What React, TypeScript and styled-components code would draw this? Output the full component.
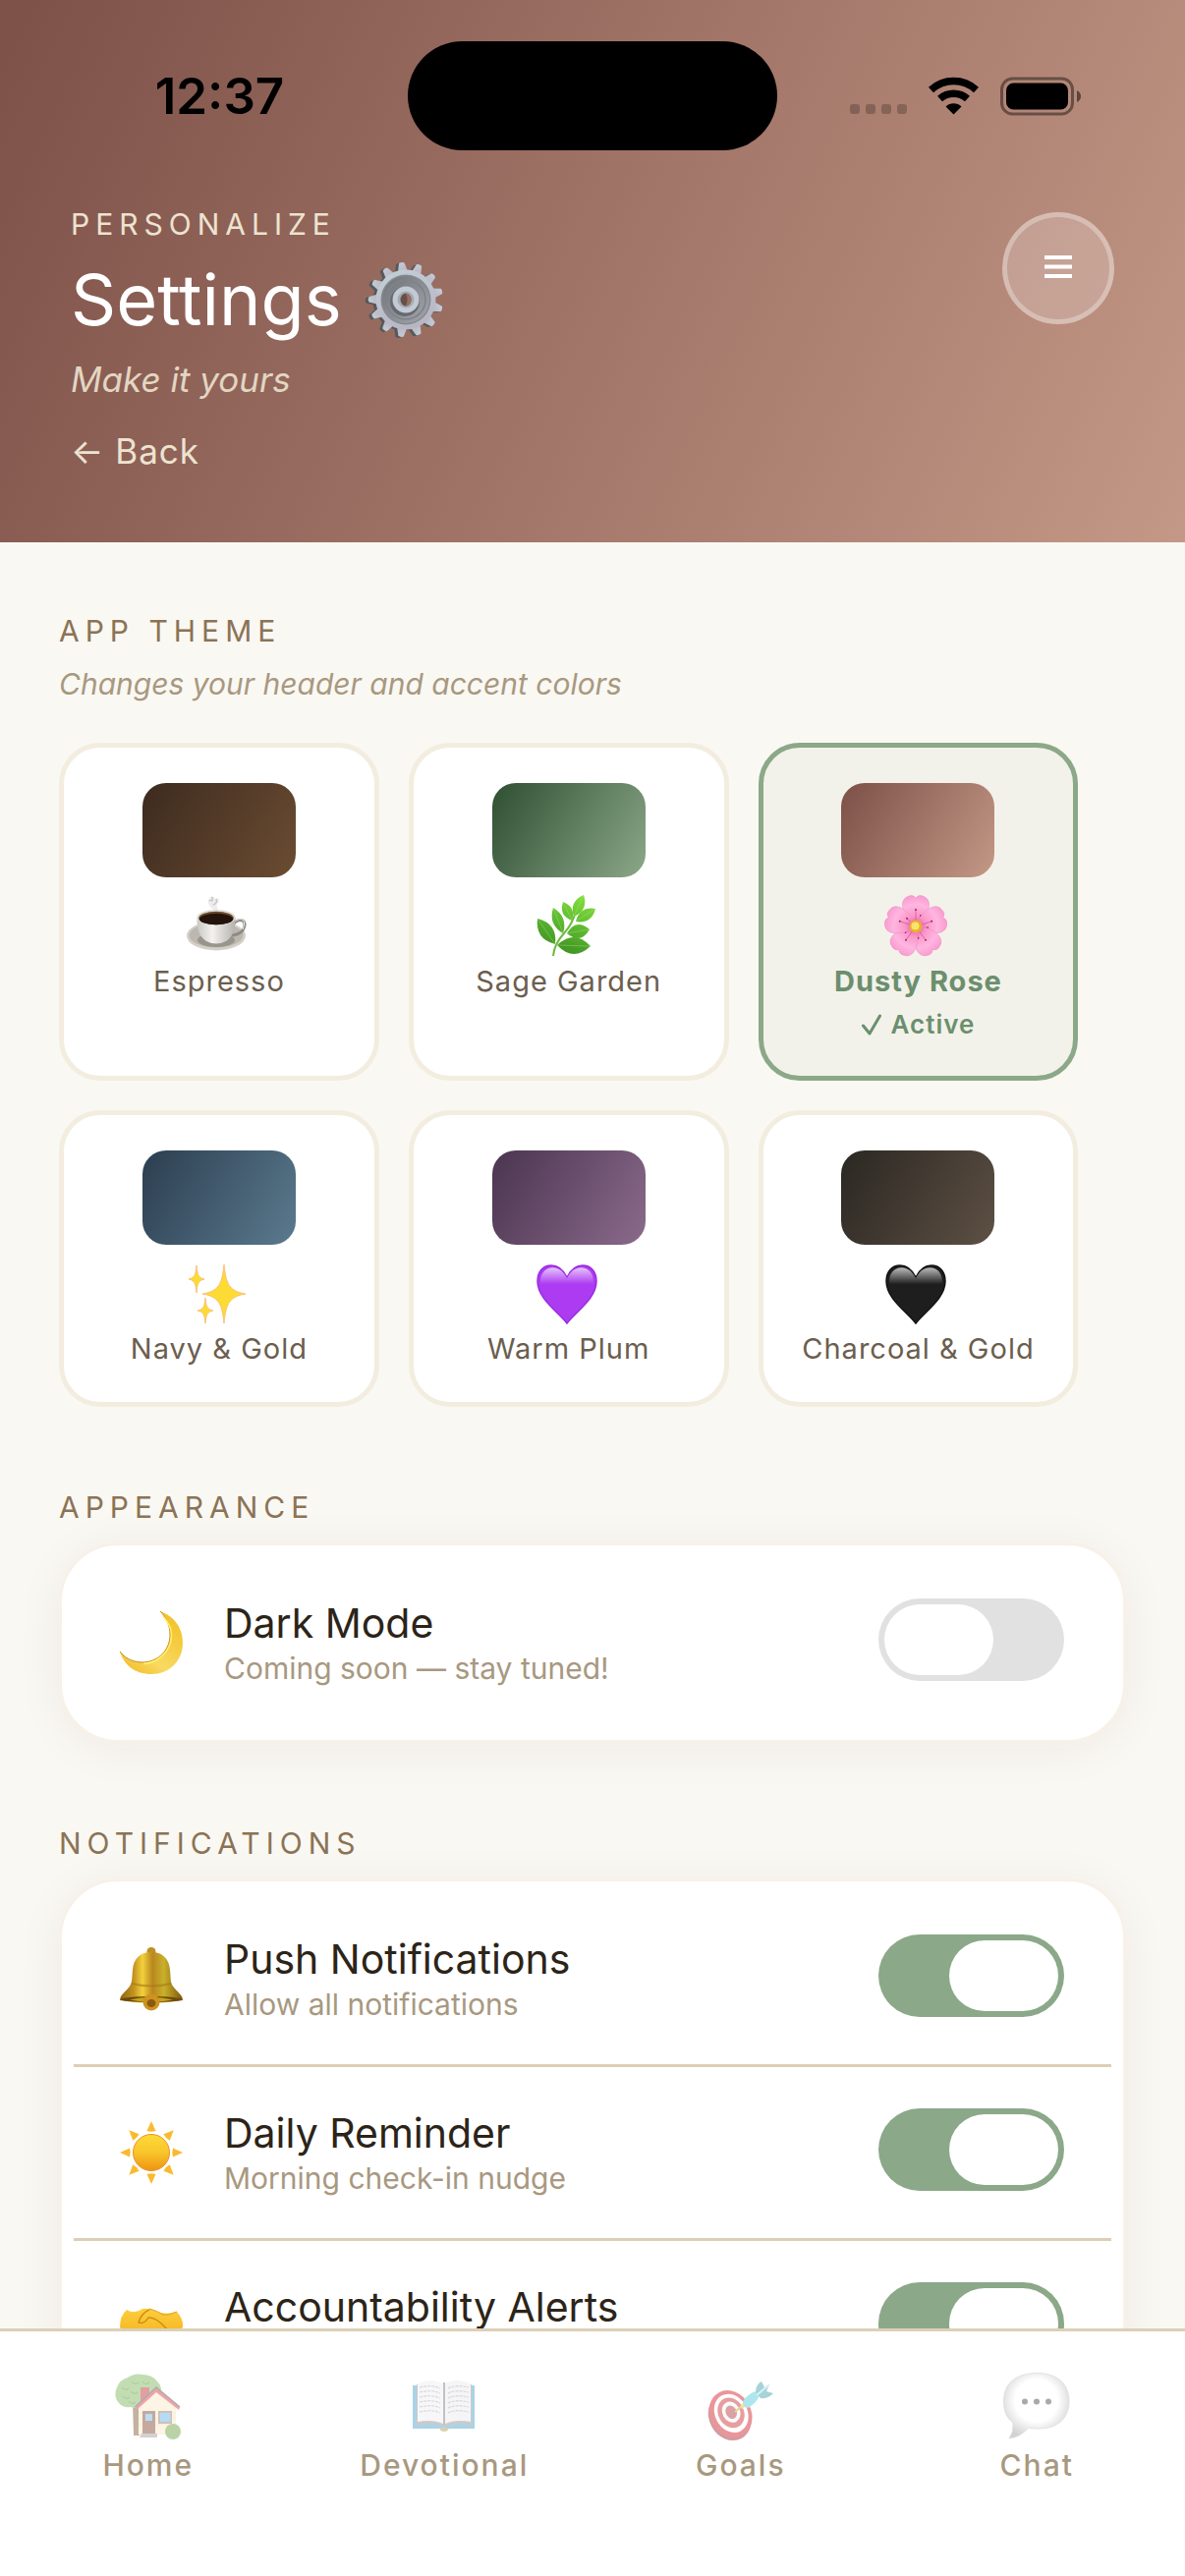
import React, { useState } from 'react';
import styled, { createGlobalStyle } from 'styled-components';

const GlobalStyle = createGlobalStyle`
  *, *::before, *::after { box-sizing: border-box; }
  html, body, #root { height: 100%; }
  body {
    margin: 0;
    background: #faf8f3;
    font-family: Inter, Roboto, "Liberation Sans", sans-serif;
    -webkit-font-smoothing: antialiased;
  }
  h1, h2, p { margin: 0; font-weight: 400; }
  button { font: inherit; }
`;

/* ---------- layout ---------- */

const Screen = styled.div`
  display: flex;
  flex-direction: column;
  height: 100vh;
  overflow: hidden;
`;

const Header = styled.header`
  flex: none;
  background: linear-gradient(115deg, #7d5048, #c49886);
`;

const StatusBar = styled.div`
  display: grid;
  grid-template-columns: 1fr 378px 1fr;
  align-items: center;
  justify-items: center;
  height: 195px;
  padding: 0 33px;
`;

const Clock = styled.time`
  font-size: 51px;
  line-height: 60px;
  font-weight: 600;
  color: #000;
`;

const Island = styled.div`
  width: 376px;
  height: 111px;
  border-radius: 56px;
  background: #000;
`;

const StatusIcons = styled.svg`
  display: block;
  width: 236px;
  height: 40px;
`;

const HeaderRow = styled.div`
  display: flex;
  justify-content: space-between;
  align-items: flex-start;
  padding: 15px 72px 70px;
`;

const HeaderCopy = styled.div`
  display: flex;
  flex-direction: column;
  align-items: flex-start;
`;

const Overline = styled.p`
  font-size: 30px;
  line-height: 36px;
  letter-spacing: 6px;
  color: #ede3d0;
`;

const Title = styled.h1`
  display: flex;
  align-items: center;
  gap: 24px;
  margin-top: 14px;
  font-size: 72px;
  line-height: 90px;
  color: #fff;
`;

const Tagline = styled.p`
  margin-top: 14px;
  font-size: 35px;
  line-height: 45px;
  font-style: italic;
  color: #e2d6c2;
`;

const BackLink = styled.a`
  margin-top: 28px;
  font-size: 35px;
  line-height: 45px;
  letter-spacing: 1px;
  color: #ede3d0;
  text-decoration: none;
`;

const MenuButton = styled.button`
  display: grid;
  place-items: center;
  width: 114px;
  height: 114px;
  margin-top: 6px;
  padding: 0;
  border: 5px solid rgba(255, 255, 255, 0.3);
  border-radius: 50%;
  background: rgba(255, 255, 255, 0.2);
  color: #fff;
`;

const Content = styled.main`
  flex: 1;
  min-height: 0;
  display: flex;
  flex-direction: column;
  gap: 84px;
  padding: 72px 60px 0;
  overflow: hidden auto;
  scrollbar-width: none;
`;

const Section = styled.section`
  flex: none;
`;

const SectionLabel = styled.h2`
  font-size: 30px;
  line-height: 36px;
  letter-spacing: 6px;
  color: #8b7355;
`;

const SectionHint = styled.p`
  margin-top: 18px;
  font-size: 30px;
  line-height: 36px;
  font-style: italic;
  color: #a89880;
`;

/* ---------- theme picker ---------- */

const ThemeGrid = styled.div`
  display: flex;
  flex-wrap: wrap;
  gap: 30px;
  margin-top: 42px;
`;

const ThemeCard = styled.button<{ $active: boolean }>`
  display: flex;
  flex-direction: column;
  align-items: center;
  width: 30%;
  padding: 36px 0;
  border: 5px solid ${(p) => (p.$active ? '#8ba888' : '#f3ede0')};
  border-radius: 42px;
  background: ${(p) => (p.$active ? '#f3f2ea' : '#fff')};
  color: ${(p) => (p.$active ? '#6b8f6e' : '#6b5e4e')};
`;

const Swatch = styled.span<{ $from: string; $to: string }>`
  width: 156px;
  height: 96px;
  border-radius: 24px;
  background: linear-gradient(121deg, ${(p) => p.$from}, ${(p) => p.$to});
`;

const ThemeGlyph = styled.span`
  display: flex;
  padding: 18px 4px 6px 0;
`;

const Glyph = styled.svg<{ $size: number }>`
  display: block;
  flex: none;
  width: ${(p) => p.$size}px;
  height: ${(p) => p.$size}px;
  overflow: visible;
`;

const ThemeName = styled.span<{ $active: boolean }>`
  font-size: 29px;
  line-height: 36px;
  letter-spacing: 1px;
  font-weight: ${(p) => (p.$active ? 700 : 400)};
  white-space: nowrap;
`;

const ActiveMark = styled.span`
  display: flex;
  align-items: center;
  gap: 10px;
  margin-top: 9px;
  font-size: 26px;
  line-height: 33px;
  letter-spacing: 1px;
  font-weight: 600;
`;

/* ---------- settings list ---------- */

const Card = styled.div`
  margin-top: 18px;
  padding: 12px;
  border: 3px solid #f7f1e7;
  border-radius: 60px;
  background: #fff;
  box-shadow: 0 6px 48px rgba(44, 36, 24, 0.06);
`;

const Row = styled.label`
  display: flex;
  align-items: center;
  height: 174px;
  padding: 0 48px 0 47px;

  & + & {
    height: 177px;
    border-top: 3px solid #dccfb6;
  }
`;

const RowCopy = styled.span`
  flex: 1;
  display: flex;
  flex-direction: column;
  gap: 1px;
  min-height: 91px;
  margin-left: 42px;
`;

const RowTitle = styled.span`
  font-size: 41px;
  line-height: 51px;
  color: #2c2418;
`;

const RowHint = styled.span`
  font-size: 30px;
  line-height: 39px;
  color: #a89880;
`;

const Switch = styled.input`
  appearance: none;
  flex: none;
  display: flex;
  justify-content: flex-start;
  width: 189px;
  height: 84px;
  margin: 0 0 6px;
  padding: 6px;
  border-radius: 42px;
  background: #e1e1e1;

  &::before {
    content: '';
    width: 111px;
    height: 72px;
    border-radius: 36px;
    background: #fff;
  }

  &:checked {
    justify-content: flex-end;
    background: #8ba888;
  }
`;

/* ---------- tab bar ---------- */

const TabBar = styled.nav`
  flex: none;
  display: grid;
  grid-template-columns: repeat(4, 1fr);
  padding: 42px 0 95px;
  border-top: 3px solid #dccfb6;
  background: #fff;
`;

const Tab = styled.a`
  display: flex;
  flex-direction: column;
  align-items: center;
  gap: 8px;
  color: #a89880;
  text-decoration: none;

  svg { opacity: 0.5; }
`;

const TabLabel = styled.span`
  font-size: 30px;
  line-height: 36px;
  letter-spacing: 2px;
  font-weight: 500;
`;

/* ---------- drawings ---------- */

const GearIcon = () => (
  <Glyph $size={78} viewBox="0 0 78 78" aria-hidden="true">
    <defs>
      <linearGradient id="gearFace" x1="0" y1="0" x2="0.4" y2="1">
        <stop offset="0" stopColor="#c3d0d8" />
        <stop offset="1" stopColor="#b9b6c4" />
      </linearGradient>
      <linearGradient id="gearDish" x1="0" y1="0" x2="1" y2="1">
        <stop offset="0" stopColor="#6f7479" />
        <stop offset="1" stopColor="#a3a5ad" />
      </linearGradient>
    </defs>
    {[0, 1].map((layer) => (
      <g key={layer} transform={layer ? 'translate(1 0)' : 'translate(-2 1)'} fill={layer ? 'url(#gearFace)' : '#55595b'}>
        {Array.from({ length: 13 }, (_, i) => (
          <path key={i} d="M34.500 12 L37 1.500 Q40 0 42.500 1.500 L45.500 12 Z" transform={`rotate(${(i * 360) / 13 - 6} 40 39)`} />
        ))}
        <circle cx="40" cy="39" r="30.500" />
      </g>
    ))}
    <circle cx="41" cy="39" r="25.500" fill="#858a91" />
    <circle cx="41" cy="39" r="24" fill="url(#gearDish)" />
    <circle cx="41" cy="39" r="20" fill="none" stroke="#7f8389" strokeWidth="1.500" />
    <circle cx="40" cy="41" r="15" fill="#66696e" />
    <circle cx="41" cy="39" r="13.500" fill="#c2cad4" />
    <circle cx="41" cy="39" r="8.500" fill="#a4aab4" />
    <ellipse cx="41" cy="39" rx="5.500" ry="6.500" fill="#66514b" />
    <path d="M41 32.500 A5.500 6.500 0 0 1 41 45.500 Q44 39 41 32.500Z" fill="#99705f" />
  </Glyph>
);

const CoffeeIcon = () => (
  <Glyph $size={64} viewBox="0 0 64 64" aria-hidden="true">
    <defs>
      <linearGradient id="cup" x1="0" x2="1">
        <stop offset="0" stopColor="#c9c7c2" />
        <stop offset="0.4" stopColor="#f3f2ee" />
        <stop offset="1" stopColor="#b5b2ac" />
      </linearGradient>
    </defs>
    <path d="M28 15 Q20 8 24 3 Q28 -1 30 4 Q34 1 34 7 Q30 9 33 15" fill="#e9e9e9" opacity="0.8" />
    <path d="M24 5 Q28 8 27 2 M31 4 Q33 8 28 10" fill="none" stroke="#c5c5c5" strokeWidth="1.500" />
    <ellipse cx="31" cy="41.500" rx="30" ry="15" fill="#d3d0ca" />
    <ellipse cx="31" cy="41" rx="27.500" ry="12.500" fill="#bcb8b0" />
    <ellipse cx="31" cy="46" rx="19" ry="7" fill="#99958c" />
    <path d="M48 30 Q53 24 58 26 Q62 29 58 36 Q54 41 45 41" fill="none" stroke="#8f8c86" strokeWidth="3" />
    <path d="M48 29 Q53 23 58 25 Q61 28 58 35" fill="none" stroke="#ecebe7" strokeWidth="1" />
    <path d="M11.500 23 Q11 41 21 47 Q31 52 41 47 Q51 41 50.500 23Z" fill="url(#cup)" />
    <ellipse cx="31" cy="23" rx="19.500" ry="8" fill="#dcdad5" />
    <ellipse cx="31" cy="23.500" rx="17.800" ry="6.800" fill="#6b4a2b" />
    <ellipse cx="31" cy="24.500" rx="17" ry="5.800" fill="#24130b" />
  </Glyph>
);

type LeafProps = { from: [number, number]; to: [number, number]; bulge: number };

const Leaf = ({ from: [x1, y1], to: [x2, y2], bulge }: LeafProps) => {
  const len = Math.hypot(x2 - x1, y2 - y1);
  const nx = (-(y2 - y1) / len) * bulge;
  const ny = ((x2 - x1) / len) * bulge;
  const mx = x1 + (x2 - x1) * 0.5;
  const my = y1 + (y2 - y1) * 0.5;
  return (
    <g>
      <path d={`M${x1} ${y1} Q${mx + nx} ${my + ny} ${x2} ${y2} Q${mx - nx} ${my - ny} ${x1} ${y1}Z`} fill="url(#leaf)" />
      <path d={`M${x1} ${y1} L${x2} ${y2}`} stroke="#b5e884" strokeWidth="0.6" opacity="0.6" />
    </g>
  );
};

const HerbIcon = () => (
  <Glyph $size={64} viewBox="0 0 64 64" aria-hidden="true">
    <defs>
      <linearGradient id="leaf" gradientUnits="userSpaceOnUse" x1="48" y1="0" x2="24" y2="62">
        <stop offset="0" stopColor="#83df3c" />
        <stop offset="0.5" stopColor="#5cb930" />
        <stop offset="1" stopColor="#3c8c22" />
      </linearGradient>
    </defs>
    <path d="M18 62 Q19 50 29 39 Q38 29 41 16" fill="none" stroke="#6cbb3c" strokeWidth="2" />
    <Leaf from={[20, 50]} to={[2, 24]} bulge={14} />
    <Leaf from={[28, 39]} to={[18, 13]} bulge={11} />
    <Leaf from={[37, 26]} to={[28, 7]} bulge={10} />
    <Leaf from={[39, 22]} to={[49, 0]} bulge={11} />
    <Leaf from={[41, 27]} to={[61, 14]} bulge={11} />
    <Leaf from={[32, 39]} to={[55, 35]} bulge={14} />
    <Leaf from={[22, 51]} to={[56, 52]} bulge={17} />
  </Glyph>
);

const BlossomIcon = () => (
  <Glyph $size={64} viewBox="0 0 64 64" aria-hidden="true">
    <defs>
      <radialGradient id="petal" gradientUnits="userSpaceOnUse" cx="32" cy="32" r="32">
        <stop offset="0" stopColor="#e0559c" />
        <stop offset="0.35" stopColor="#fb98cb" />
        <stop offset="0.7" stopColor="#ffb6e0" />
        <stop offset="1" stopColor="#f99ad0" />
      </radialGradient>
    </defs>
    {[0, 72, 144, 216, 288].map((a) => (
      <g key={a} transform={`rotate(${a} 32 32)`}>
        <path d="M32 32 C22 26 12 6 24 1.500 Q29 -1 32 3 Q35 -1 40 1.500 C52 6 42 26 32 32Z" fill="url(#petal)" stroke="#f08fc4" strokeWidth="0.6" />
        <path d="M32 27 L32 16 M34 27 L37 21" stroke="#d75a98" strokeWidth="0.8" />
        <circle cx="32" cy="15" r="1" fill="#8f2457" />
        <circle cx="37" cy="21" r="1" fill="#8f2457" />
      </g>
    ))}
    <circle cx="32" cy="32" r="6.500" fill="#e6b02e" />
    <circle cx="31.500" cy="31.500" r="4" fill="#fbe36b" />
  </Glyph>
);

const STAR = (cx: number, cy: number, rx: number, ry: number) =>
  `M${cx} ${cy - ry} C${cx + rx * 0.1} ${cy - ry * 0.3} ${cx + rx * 0.25} ${cy - ry * 0.1} ${cx + rx} ${cy} C${cx + rx * 0.25} ${cy + ry * 0.1} ${cx + rx * 0.1} ${cy + ry * 0.3} ${cx} ${cy + ry} C${cx - rx * 0.1} ${cy + ry * 0.3} ${cx - rx * 0.25} ${cy + ry * 0.1} ${cx - rx} ${cy} C${cx - rx * 0.25} ${cy - ry * 0.1} ${cx - rx * 0.1} ${cy - ry * 0.3} ${cx} ${cy - ry}Z`;

const SparklesIcon = () => (
  <Glyph $size={64} viewBox="0 0 64 64" aria-hidden="true">
    <g fill="#fddb35" stroke="#f9b868" strokeWidth="0.8">
      <path d={STAR(39, 32, 22, 30)} />
      <path d={STAR(11, 17, 8, 14)} />
      <path d={STAR(20, 49, 8, 13)} />
    </g>
  </Glyph>
);

const HEART =
  'M32 62 C23 50 2 37 2 19 C2 9 8 3 16 3 C24 3 29 9 32 15 C35 9 40 3 48 3 C56 3 62 9 62 19 C62 37 41 50 32 62Z';

const HeartIcon = ({ id, fill, edge }: { id: string; fill: string; edge: string }) => (
  <Glyph $size={64} viewBox="0 0 64 64" aria-hidden="true">
    <defs>
      <linearGradient id={id} x1="0" y1="0" x2="0" y2="1">
        <stop offset="0" stopColor="#fff" stopOpacity="0.7" />
        <stop offset="0.32" stopColor="#fff" stopOpacity="0" />
      </linearGradient>
    </defs>
    <path d={HEART} fill={fill} stroke={edge} strokeWidth="1.500" />
    <path d={HEART} fill={`url(#${id})`} transform="translate(3.200 2.500) scale(0.9)" />
  </Glyph>
);

const MoonIcon = () => (
  <Glyph $size={64} viewBox="0 0 64 64" aria-hidden="true">
    <defs>
      <linearGradient id="moon" x1="0.2" y1="1" x2="1" y2="0">
        <stop offset="0" stopColor="#f3bf2c" />
        <stop offset="0.3" stopColor="#f8da62" />
        <stop offset="1" stopColor="#f2bd1f" />
      </linearGradient>
    </defs>
    <path d="M41 0 C55 5 64 17 64 32 C64 51 50 64 32 64 C16 64 4 55 0 41 C7 50 16 52 24 52 C40 51 51 39 51 24 C51 14 47 6 41 0Z" fill="url(#moon)" />
    <path d="M41 0 C47 6 51 14 51 24 C51 39 40 51 24 52 C16 52 7 50 0 41" fill="none" stroke="#c98a23" strokeWidth="1" />
    <path d="M44 5 C49 11 52.500 17 52.500 24 C52.500 40 40 52.500 24 53.500" fill="none" stroke="#fff06a" strokeWidth="1.500" />
  </Glyph>
);

const BellIcon = () => (
  <Glyph $size={64} viewBox="0 0 64 64" aria-hidden="true">
    <defs>
      <linearGradient id="bell" x1="0" x2="1">
        <stop offset="0" stopColor="#8d6511" />
        <stop offset="0.22" stopColor="#c3921f" />
        <stop offset="0.36" stopColor="#f3d13b" />
        <stop offset="0.52" stopColor="#b98720" />
        <stop offset="0.7" stopColor="#c9b02a" />
        <stop offset="1" stopColor="#805510" />
      </linearGradient>
    </defs>
    <circle cx="32" cy="4.500" r="4.500" fill="#c08f22" />
    <path d="M32 5 C20 5 14 12 13 23 C12 33 13 36 9 41 C5 46 0 49 0 54 Q32 60 64 54 C64 49 59 46 55 41 C51 36 52 33 51 23 C50 12 44 5 32 5Z" fill="url(#bell)" />
    <path d="M12 37 Q32 42 52 37" fill="none" stroke="#a87718" strokeWidth="2" opacity="0.6" />
    <ellipse cx="32" cy="53" rx="31" ry="3" fill="#6f4a0d" />
    <path d="M10 53.500 Q32 48 54 53.500 Q32 58 10 53.500Z" fill="#c3a51f" />
    <circle cx="32" cy="56" r="8.500" fill="#cf921f" />
    <ellipse cx="32" cy="57" rx="4.500" ry="4" fill="#8b5a12" />
  </Glyph>
);

const SunIcon = () => (
  <Glyph $size={64} viewBox="0 0 64 64" aria-hidden="true">
    <defs>
      <linearGradient id="sun" x1="0" y1="0" x2="0" y2="1">
        <stop offset="0" stopColor="#fddb36" />
        <stop offset="0.5" stopColor="#f8c52b" />
        <stop offset="1" stopColor="#ef9311" />
      </linearGradient>
    </defs>
    {Array.from({ length: 8 }, (_, i) => (
      <path key={i} d="M32 0 L36.500 10 Q32 11.500 27.500 10Z" fill="#f9bb2d" transform={`rotate(${i * 45} 32 32)`} />
    ))}
    <circle cx="32" cy="32" r="18.500" fill="url(#sun)" stroke="#e9912a" strokeWidth="1" />
  </Glyph>
);

const HandshakeIcon = () => (
  <Glyph $size={64} viewBox="0 0 64 64" aria-hidden="true">
    <defs>
      <linearGradient id="hands" x1="0" y1="0" x2="0" y2="1">
        <stop offset="0" stopColor="#fdcf3c" />
        <stop offset="1" stopColor="#f0ab1c" />
      </linearGradient>
    </defs>
    <path d="M7 15 Q15 20 23 14 Q30 13 36 16 Q45 21 58 17 Q65 25 64 33 Q58 38 52 41 Q40 54 30 50 Q18 44 12 36 Q5 38 0 33 Q0 21 7 15Z" fill="url(#hands)" />
    <path d="M30 15 Q22 18 19 28 Q25 30 29 23 Q37 22 48 35" fill="none" stroke="#d18d14" strokeWidth="1.500" />
    <path d="M58 17 Q50 21 44 20 Q38 16 30 14" fill="none" stroke="#e0a01f" strokeWidth="1" />
  </Glyph>
);

const HouseIcon = () => (
  <Glyph $size={68} viewBox="0 0 68 68" aria-hidden="true">
    <path d="M18 30 H25 V64 H19Z" fill="#8a6845" />
    <path d="M4 31 Q-2 24 2 15 Q5 7 13 5 Q20 0 28 2 Q38 2 43 9 Q48 13 47 22 Q44 32 33 33 Q24 38 16 35 Q8 36 4 31Z" fill="#87bd66" />
    <path d="M7 15 q3 4 7 1 M17 9 q3 4 7 1 M28 9 q3 4 7 1 M8 24 q3 4 7 1 M16 19 q3 4 7 1 M14 29 q3 4 7 1" fill="none" stroke="#63994a" strokeWidth="1.200" />
    <path d="M26 15 H35 V24 L26 32Z" fill="#c44146" />
    <path d="M24 34 L42 17 L62 34 V63 H24Z" fill="#fbeacb" />
    <path d="M24 41 H62 M24 47 H62 M24 53 H62" stroke="#eedcb9" strokeWidth="1" />
    <path d="M20.500 35 L42 15 L66 35 L65 38 L42 20 L22 38Z" fill="#e14a51" />
    <path d="M20.500 35 L42 15 L66 35" fill="none" stroke="#5b5b62" strokeWidth="1.500" />
    <path d="M28 39 H41 V62 H28Z" fill="#8a5642" />
    <path d="M31 42 H38 V49 H31Z" fill="#78bdea" />
    <path d="M44 39 H58 V52 H44Z" fill="#a08471" />
    <path d="M46 41 H56.500 V50 H46Z" fill="#6fb9ec" />
    <path d="M27 62 H43 V66 H25Z" fill="#a9a59e" />
    <circle cx="59" cy="60" r="8" fill="#76a94f" />
  </Glyph>
);

const BookIcon = () => (
  <Glyph $size={68} viewBox="0 0 68 68" aria-hidden="true">
    <path d="M2 13 H65 V57 H38 Q34 60 30 57 H2Z" fill="#58a8ce" />
    <path d="M29 56 h10 q-1 4 -5 4 t-5 -4Z" fill="#b0a565" />
    <path d="M6 12 V54 Q22 50 34 55 Q46 50 62 54 V12Z" fill="#96969a" />
    <path d="M7 11 Q22 5 33 11 V52 Q22 47 7 50Z" fill="#f1f1f5" />
    <path d="M61 11 Q46 5 35 11 V52 Q46 47 61 50Z" fill="#ececf1" />
    <path d="M34 10 V53" stroke="#85858a" strokeWidth="2" />
    {[15, 20, 25, 30, 35, 40].map((y) => (
      <path key={y} d={`M9 ${y} Q22 ${y - 3} 30 ${y + 1} M38 ${y + 1} Q46 ${y - 3} 59 ${y}`} fill="none" stroke="#b2b2b8" strokeWidth="1.200" strokeDasharray="3 1" />
    ))}
  </Glyph>
);

const TargetIcon = () => (
  <Glyph $size={68} viewBox="0 0 68 68" aria-hidden="true">
    <g transform="rotate(-28 24 42)">
      <ellipse cx="21.500" cy="44" rx="21" ry="25" fill="#a23b43" />
      <ellipse cx="23.500" cy="42" rx="21" ry="25" fill="#d52f38" />
      <ellipse cx="24.500" cy="41.500" rx="16.500" ry="20.500" fill="#fff" />
      <ellipse cx="24.500" cy="41" rx="13" ry="16" fill="#cf4046" />
      <ellipse cx="25" cy="40.500" rx="9" ry="11" fill="#f7f7f7" />
      <ellipse cx="25" cy="40.500" rx="5.500" ry="7" fill="#b9454b" />
    </g>
    <path d="M28 40 L37 32" stroke="#d2a928" strokeWidth="2" />
    <path d="M34 35 L39 26 L43 32 L35 37Z" fill="#ecc83c" />
    <path d="M36 29 Q42 21 49 19 L53 23 Q50 31 41 36 Q36 35 36 29Z" fill="#5cd0dc" />
    <path d="M49 20 Q49 12 55 9 L58 15 L63 12 L60 19 L67 21 Q62 27 54 26Z" fill="#50a9b6" />
    <path d="M50 23 L62 13" stroke="#b7e4e8" strokeWidth="2" />
  </Glyph>
);

const ChatIcon = () => (
  <Glyph $size={68} viewBox="0 0 68 68" aria-hidden="true">
    <defs>
      <radialGradient id="bubble" cx="0.5" cy="0.42" r="0.6">
        <stop offset="0.55" stopColor="#fff" />
        <stop offset="1" stopColor="#a5a5a5" />
      </radialGradient>
    </defs>
    <path d="M34 0.500 C56 0.500 67 12 67 29 C67 46 56 57 36 57 Q31 57 26 56 Q17 66 6 67 Q11 60 10 51 C3 46 0.500 38 0.500 29 C0.500 12 12 0.500 34 0.500Z" fill="url(#bubble)" stroke="#bdbdbd" strokeWidth="0.8" />
    {[22, 34, 46].map((x) => (
      <circle key={x} cx={x} cy="29.500" r="3" fill="#555" />
    ))}
  </Glyph>
);

/* ---------- data ---------- */

const themes = [
  { name: 'Espresso', from: '#3d2b1f', to: '#6b4c32', icon: <CoffeeIcon /> },
  { name: 'Sage Garden', from: '#2f4f33', to: '#8ba888', icon: <HerbIcon /> },
  { name: 'Dusty Rose', from: '#7d5048', to: '#c49886', icon: <BlossomIcon /> },
  { name: 'Navy & Gold', from: '#2c3e50', to: '#5b7a8e', icon: <SparklesIcon /> },
  { name: 'Warm Plum', from: '#4a3550', to: '#8b6a8b', icon: <HeartIcon id="plumShine" fill="#ac3bf2" edge="#9a2be0" /> },
  { name: 'Charcoal & Gold', from: '#2a2722', to: '#5e5044', icon: <HeartIcon id="inkShine" fill="#1e1e1e" edge="#111" /> },
];

const notifications = [
  { title: 'Push Notifications', hint: 'Allow all notifications', icon: <BellIcon /> },
  { title: 'Daily Reminder', hint: 'Morning check-in nudge', icon: <SunIcon /> },
  { title: 'Accountability Alerts', icon: <HandshakeIcon /> },
];

const tabs = [
  { name: 'Home', icon: <HouseIcon /> },
  { name: 'Devotional', icon: <BookIcon /> },
  { name: 'Goals', icon: <TargetIcon /> },
  { name: 'Chat', icon: <ChatIcon /> },
];

type SettingProps = { title: string; hint?: string; icon: React.ReactNode; on?: boolean };

const Setting = ({ title, hint, icon, on = false }: SettingProps) => (
  <Row>
    {icon}
    <RowCopy>
      <RowTitle>{title}</RowTitle>
      {hint && <RowHint>{hint}</RowHint>}
    </RowCopy>
    <Switch type="checkbox" role="switch" defaultChecked={on} />
  </Row>
);

export default function App() {
  const [theme, setTheme] = useState('Dusty Rose');

  return (
    <Screen>
      <GlobalStyle />
      <Header>
        <StatusBar>
          <Clock>12:37</Clock>
          <Island />
          <StatusIcons viewBox="0 0 236 40" aria-hidden="true">
            <g fill="#000" fillOpacity="0.22">
              {[0, 16, 32, 48].map((x) => (
                <rect key={x} x={x} y="28" width="10" height="10" rx="3" />
              ))}
            </g>
            <g fill="none" stroke="#000" strokeWidth="7.500">
              <path d="M82.500 13.500 A34 34 0 0 1 128.500 13.500" />
              <path d="M91.500 22.500 A21 21 0 0 1 119.500 22.500" />
            </g>
            <path d="M105.500 38.500 L97.500 30.500 A11.500 11.500 0 0 1 113.500 30.500Z" fill="#000" />
            <rect x="154.500" y="2" width="72" height="36" rx="11" fill="none" stroke="#000" strokeOpacity="0.42" strokeWidth="3" />
            <rect x="159" y="6.500" width="63" height="27" rx="7.500" fill="#000" />
            <path d="M231 14 Q235 16 235 20 Q235 24 231 26Z" fill="#000" fillOpacity="0.5" />
          </StatusIcons>
        </StatusBar>
        <HeaderRow>
          <HeaderCopy>
            <Overline>PERSONALIZE</Overline>
            <Title>
              Settings
              <GearIcon />
            </Title>
            <Tagline>Make it yours</Tagline>
            <BackLink href="#back">← Back</BackLink>
          </HeaderCopy>
          <MenuButton type="button" aria-label="Menu">
            <svg width="28" height="28" viewBox="0 0 28 28" aria-hidden="true">
              <path d="M0 3 H28 M0 12.500 H28 M0 22 H28" stroke="#fff" strokeWidth="4" />
            </svg>
          </MenuButton>
        </HeaderRow>
      </Header>

      <Content>
        <Section>
          <SectionLabel>APP THEME</SectionLabel>
          <SectionHint>Changes your header and accent colors</SectionHint>
          <ThemeGrid>
            {themes.map((t) => {
              const active = t.name === theme;
              return (
                <ThemeCard key={t.name} type="button" $active={active} aria-pressed={active} onClick={() => setTheme(t.name)}>
                  <Swatch $from={t.from} $to={t.to} />
                  <ThemeGlyph>{t.icon}</ThemeGlyph>
                  <ThemeName $active={active}>{t.name}</ThemeName>
                  {active && (
                    <ActiveMark>
                      <svg width="20" height="22" viewBox="0 0 20 22" aria-hidden="true">
                        <path d="M1.500 12 L8 20 L18.500 2" fill="none" stroke="currentColor" strokeWidth="3" strokeLinecap="round" strokeLinejoin="round" />
                      </svg>
                      Active
                    </ActiveMark>
                  )}
                </ThemeCard>
              );
            })}
          </ThemeGrid>
        </Section>

        <Section>
          <SectionLabel>APPEARANCE</SectionLabel>
          <Card>
            <Setting title="Dark Mode" hint="Coming soon — stay tuned!" icon={<MoonIcon />} />
          </Card>
        </Section>

        <Section>
          <SectionLabel>NOTIFICATIONS</SectionLabel>
          <Card>
            {notifications.map((n) => (
              <Setting key={n.title} {...n} on />
            ))}
          </Card>
        </Section>
      </Content>

      <TabBar>
        {tabs.map((t) => (
          <Tab key={t.name} href={`#${t.name.toLowerCase()}`}>
            {t.icon}
            <TabLabel>{t.name}</TabLabel>
          </Tab>
        ))}
      </TabBar>
    </Screen>
  );
}
